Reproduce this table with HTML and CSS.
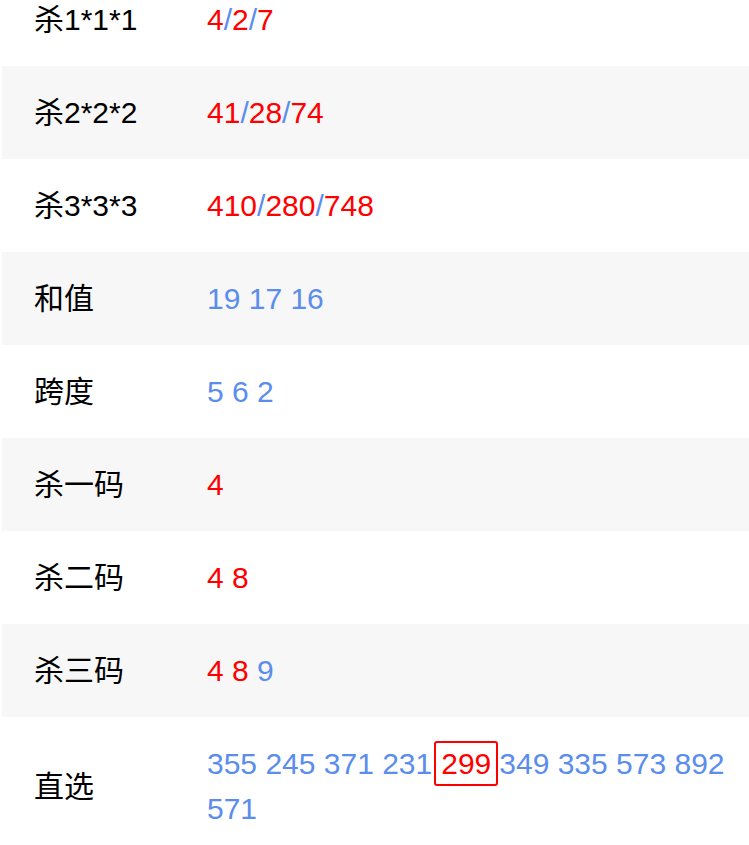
FILE: index.html
```html
<!DOCTYPE html>
<html lang="zh-CN">
<head>
    <meta charset="UTF-8">
    <meta name="viewport" content="width=device-width, initial-scale=1.0">
    <title>杀码推荐</title>
    <link rel="stylesheet" href="styles.css">
</head>
<body>

    <div class="kill-list">
        <div class="kill-row">
            <div class="kill-row__label">杀1*1*1</div>
            <div class="kill-row__value"><span class="red">4</span>/<span class="red">2</span>/<span class="red">7</span></div>
        </div>
        <div class="kill-row kill-row--alt">
            <div class="kill-row__label">杀2*2*2</div>
            <div class="kill-row__value"><span class="red">41</span>/<span class="red">28</span>/<span class="red">74</span></div>
        </div>
        <div class="kill-row">
            <div class="kill-row__label">杀3*3*3</div>
            <div class="kill-row__value"><span class="red">410</span>/<span class="red">280</span>/<span class="red">748</span></div>
        </div>
        <div class="kill-row kill-row--alt">
            <div class="kill-row__label">和值</div>
            <div class="kill-row__value">19 17 16</div>
        </div>
        <div class="kill-row">
            <div class="kill-row__label">跨度</div>
            <div class="kill-row__value">5 6 2</div>
        </div>
        <div class="kill-row kill-row--alt">
            <div class="kill-row__label">杀一码</div>
            <div class="kill-row__value"><span class="red">4</span></div>
        </div>
        <div class="kill-row">
            <div class="kill-row__label">杀二码</div>
            <div class="kill-row__value"><span class="red">4 8</span></div>
        </div>
        <div class="kill-row kill-row--alt">
            <div class="kill-row__label">杀三码</div>
            <div class="kill-row__value"><span class="red">4 8</span> 9</div>
        </div>
        <div class="kill-row">
            <div class="kill-row__label">直选</div>
            <div class="kill-row__value">355 245 371 231<span class="hit">299</span>349 335 573 892 571</div>
        </div>
    </div>

</body>
</html>
```

FILE: styles.css
```css
* {
    margin: 0;
    padding: 0;
    box-sizing: border-box;
}

body {
    background: #fff;
    font-family: "Liberation Sans", "Noto Sans CJK SC", sans-serif;
    font-size: 30px;
    line-height: 45px;
    color: #000;
    overflow: hidden;
}

.kill-list {
    margin-top: -27px;
    padding-left: 2px;
}

.kill-row {
    display: grid;
    grid-template-columns: 205px 1fr;
    align-items: center;
    padding: 24px 0;
}

.kill-row--alt {
    background-color: #f7f7f7;
}

.kill-row__label {
    padding-left: 32px;
}

.kill-row__value {
    color: #5a8dee;
}

.red {
    color: #ff0000;
}

.hit {
    display: inline-block;
    padding: 0 5px;
    margin: 0 1px 0 2px;
    border: 2px solid #ff0000;
    border-radius: 3px;
    color: #ff0000;
    line-height: 41px;
}
```
